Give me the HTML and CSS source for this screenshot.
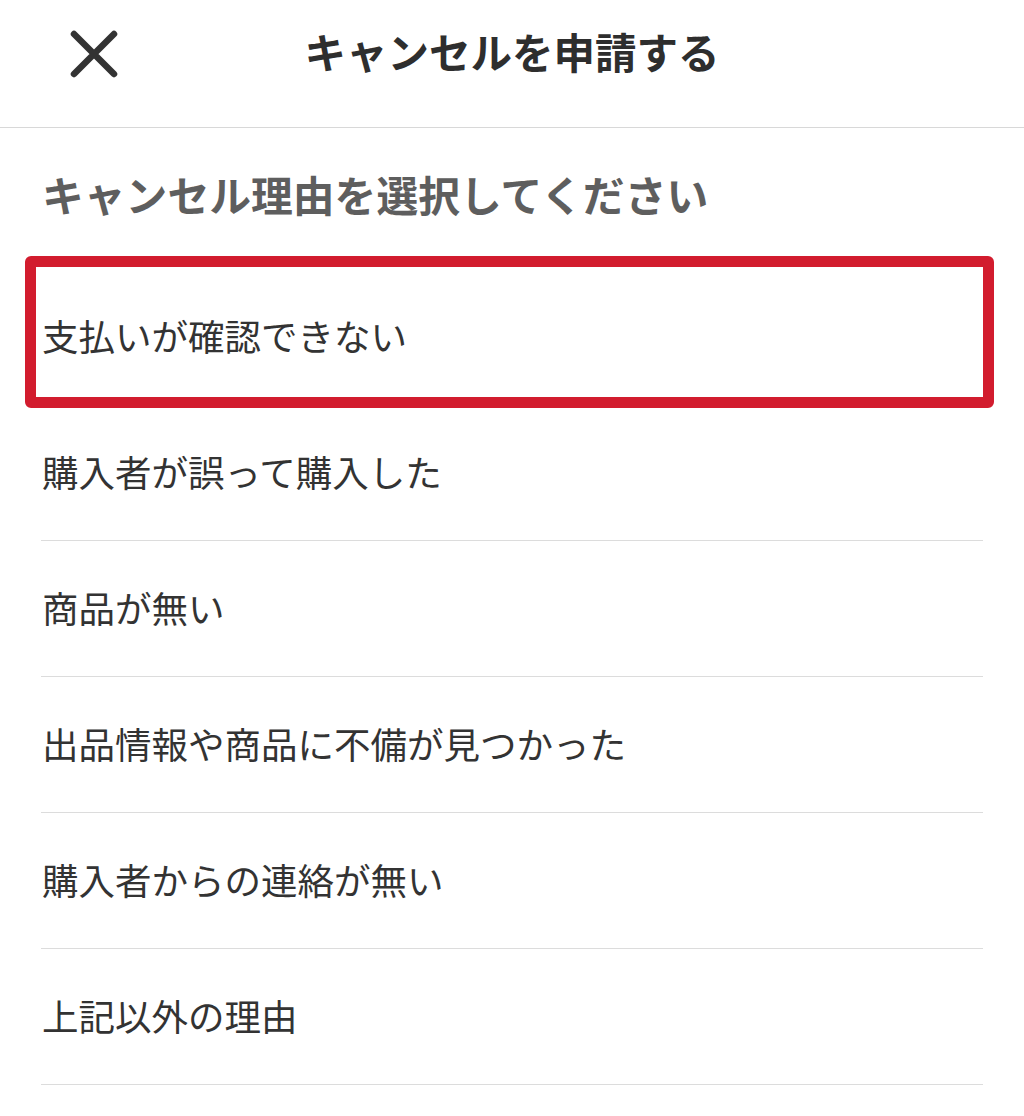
FILE: index.html
```html
<!DOCTYPE html>
<html lang="ja">
<head>
<meta charset="utf-8">
<title>キャンセルを申請する</title>
<link rel="stylesheet" href="styles.css">
</head>
<body>
<div class="sheet">
  <header class="header">
    <div class="close">
      <svg width="48" height="48" viewBox="0 0 48 48" aria-hidden="true">
        <path d="M4 4 L44 44 M44 4 L4 44" stroke="#333" stroke-width="6.5" stroke-linecap="round" fill="none"/>
      </svg>
    </div>
    <h1 class="title">キャンセルを申請する</h1>
    <div></div>
  </header>
  <h2 class="subtitle">キャンセル理由を選択してください</h2>
  <ul class="list">
    <li class="item selected"><span class="highlight"></span>支払いが確認できない</li>
    <li class="item">購入者が誤って購入した</li>
    <li class="item">商品が無い</li>
    <li class="item">出品情報や商品に不備が見つかった</li>
    <li class="item">購入者からの連絡が無い</li>
    <li class="item">上記以外の理由</li>
  </ul>
</div>
</body>
</html>
```
FILE: styles.css
```css
* { box-sizing: border-box; }
html, body {
  margin: 0;
  padding: 0;
  background: #fff;
}
body {
  font-family: "Noto Sans CJK JP", "Noto Sans", sans-serif;
  color: #333;
}
.sheet {
  width: 1024px;
  min-height: 1116px;
  overflow: hidden;
}
.header {
  display: grid;
  grid-template-columns: 1fr auto 1fr;
  align-items: start;
  height: 128px;
  padding-top: 27px;
  border-bottom: 1px solid #d8d8d8;
}
.close {
  padding-left: 70px;
  padding-top: 3px;
  height: 51px;
}
.close svg { display: block; }
.title {
  margin: 0;
  font-size: 41.5px;
  line-height: 48px;
  font-weight: 700;
  color: #2e2e2e;
  letter-spacing: 0;
}
.subtitle {
  margin: 0;
  padding: 41px 0 0 42px;
  height: 141px;
  font-size: 41.8px;
  line-height: 50px;
  font-weight: 700;
  color: #5e5e5e;
}
.list {
  list-style: none;
  margin: 0 41px;
  padding: 0;
}
.item {
  position: relative;
  display: flex;
  align-items: center;
  height: 136px;
  padding-left: 1px;
  padding-bottom: 2px;
  border-bottom: 1px solid #dcdcdc;
  font-size: 36.5px;
  font-weight: 400;
  color: #333;
}
.highlight {
  position: absolute;
  top: -13px;
  left: -16px;
  right: -11px;
  bottom: -4px;
  border: 11px solid #d21c2e;
  border-radius: 6px;
  pointer-events: none;
}
```
